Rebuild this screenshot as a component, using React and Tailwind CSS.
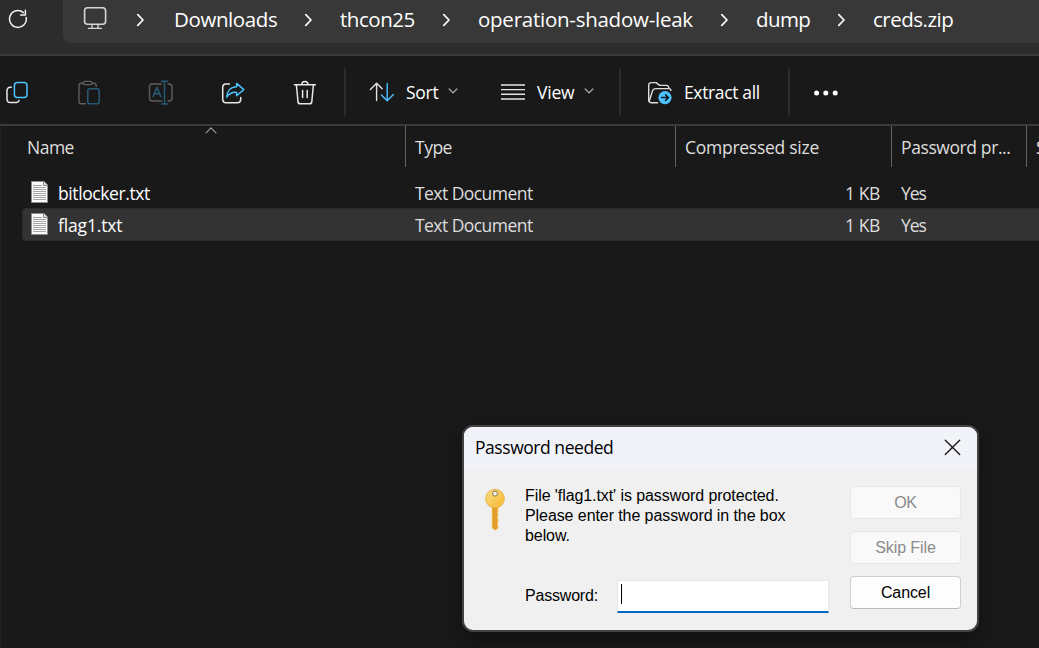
import React from "react";

const Svg = ({ w, h, className = "", children }) => (
  <svg width={w} height={h} viewBox={`0 0 ${w} ${h}`} fill="none" strokeLinecap="round" strokeLinejoin="round" className={`block shrink-0 ${className}`}>
    {children}
  </svg>
);

const CrumbChevron = ({ className }) => (
  <Svg w={8} h={14} className={className}>
    <path d="M1.8 1.6 L7 7 L1.8 12.4" stroke="#f5f5f5" strokeWidth="1.8" />
  </Svg>
);

const DownChevron = ({ className }) => (
  <Svg w={10} h={6} className={className}>
    <path d="M1.2 1 L5 4.8 L8.8 1" stroke="#b4b4b4" strokeWidth="1.2" />
  </Svg>
);

const Separator = ({ className }) => <div className={`-mt-0.5 h-12 w-0.5 shrink-0 bg-[#2c2c2c] ${className}`} />;

function AddressBar() {
  return (
    <div className="flex h-14 shrink-0 border-b-2 border-[#3a3a3a] bg-[#2c2c2c]">
      <div className="w-[63px] shrink-0 pt-2 pl-2">
        <Svg w={20} h={22}>
          <path d="M18.2 9.5 A8.4 8.4 0 1 1 15.4 4.6" stroke="#f2f2f2" strokeWidth="1.5" />
          <path d="M17.4 2.2 V7 H12.6" stroke="#f2f2f2" strokeWidth="1.5" />
        </Svg>
      </div>
      <div className="flex h-[43px] min-w-0 flex-1 items-center overflow-hidden rounded-bl-lg bg-[#383838] pb-[4px] text-[20.5px] leading-none whitespace-nowrap text-white">
        <Svg w={24} h={24} className="ml-5 -mt-1">
          <rect x="1.6" y="1.8" width="21" height="16.4" rx="3" stroke="#d6d6d6" strokeWidth="1.6" />
          <path d="M9 18.5 V22 M15 18.5 V22 M5.5 22.4 H18.5" stroke="#d6d6d6" strokeWidth="1.4" />
        </Svg>
        <CrumbChevron className="ml-[29px]" />
        <span className="-mt-px ml-[30px] w-[105px] tracking-[-0.4px]">Downloads</span>
        <CrumbChevron className="ml-[25px]" />
        <span className="-mt-px ml-[28px] w-[76px] tracking-[-0.45px]">thcon25</span>
        <CrumbChevron className="ml-[26px]" />
        <span className="-mt-px ml-[28px] w-[217px] tracking-[-0.25px]">operation-shadow-leak</span>
        <CrumbChevron className="ml-[25px]" />
        <span className="-mt-px ml-[28px] w-[56px] tracking-[-0.6px]">dump</span>
        <CrumbChevron className="ml-[25px]" />
        <span className="-mt-px ml-[28px] tracking-[-0.5px]">creds.zip</span>
      </div>
    </div>
  );
}

function Toolbar() {
  return (
    <div className="flex h-[70px] shrink-0 items-center border-b-2 border-[#3a3a3a] pb-px pt-[7px] text-[17.5px] leading-none whitespace-nowrap text-white">
      <Svg w={24} h={24} className="-mt-px ml-[5px]">
        <rect x="9.4" y="1.6" width="12.6" height="15" rx="3" stroke="#4cc2ff" strokeWidth="1.5" />
        <path d="M6.2 6.3 H5 A3 3 0 0 0 2 9.3 V18.3 A3.4 3.4 0 0 0 5.4 21.6 H11 A3 3 0 0 0 14 19.4" stroke="#e8e8e8" strokeWidth="1.5" />
      </Svg>
      <Svg w={24} h={26} className="-mt-px ml-12">
        <path d="M8.4 23.8 H4.4 A2.4 2.4 0 0 1 2 21.4 V5.4 A2.4 2.4 0 0 1 4.4 3.2 H6 M15 3.2 H17 A2.4 2.4 0 0 1 19.2 5.4 V6.4" stroke="#5e5e5e" strokeWidth="1.4" />
        <rect x="6.2" y="1.4" width="8.8" height="3.2" rx="1.6" stroke="#5e5e5e" strokeWidth="1.4" />
        <rect x="10.8" y="8.8" width="11.4" height="15" rx="2" stroke="#285a76" strokeWidth="1.5" />
      </Svg>
      <Svg w={26} h={26} className="-mt-px ml-[47px]">
        <path d="M13.5 4 H4.4 A3 3 0 0 0 1.5 7 V18 A3 3 0 0 0 4.4 21 H13.5 M20 4 H21 A3 3 0 0 1 24 7 V18 A3 3 0 0 1 21 21 H20" stroke="#5e5e5e" strokeWidth="1.4" />
        <path d="M13.4 1.2 H19.6 M13.4 24 H19.6 M16.5 1.2 V24 M5 16.6 L8.9 7.4 L12.8 16.6 M6.4 13.7 H11.4" stroke="#285a76" strokeWidth="1.5" />
      </Svg>
      <Svg w={24} h={24} className="-mt-px ml-[47px]">
        <path d="M8.4 3 H5 A3.4 3.4 0 0 0 1.7 6.4 V18.4 A3.4 3.4 0 0 0 5 21.7 H16.4 A3.4 3.4 0 0 0 19.7 18.4 V16.6" stroke="#e8e8e8" strokeWidth="1.5" />
        <path d="M15.6 2.4 L22.8 8.6 L15.6 14.8 V11.4 C11.2 11 8 12.8 5.8 16.2 C6 10 9.6 6 15.6 5.8 Z" stroke="#4cc2ff" strokeWidth="1.5" />
      </Svg>
      <Svg w={24} h={26} className="-mt-px ml-12">
        <path d="M1.4 4.8 H22.4 M8.8 4.6 A3.1 3.1 0 0 1 15 4.6 M3.4 5 L5 21.6 A2.3 2.3 0 0 0 7.2 23.8 H16.6 A2.3 2.3 0 0 0 18.8 21.6 L20.4 5 M9.6 10.4 V17.6 M14.2 10.4 V17.6" stroke="#e8e8e8" strokeWidth="1.5" />
      </Svg>
      <Separator className="ml-[27px]" />
      <Svg w={26} h={20} className="-mt-0.5 ml-[23px]">
        <path d="M7.6 18.6 V1.4 M1.4 7.4 L7.6 1.2 L13.2 6.8" stroke="#e0e0e0" strokeWidth="1.4" />
        <path d="M18.2 1.4 V18.6 M12.4 13 L18.2 18.8 L24.4 12.6" stroke="#4cc2ff" strokeWidth="1.4" />
      </Svg>
      <span className="ml-[11px] w-[34px] tracking-[-0.3px]">Sort</span>
      <DownChevron className="-mt-1 ml-2" />
      <Svg w={24} h={18} className="-mt-[3px] ml-[43px]">
        <path d="M0 2 H24 M0 6.6 H24 M0 11.2 H24 M0 16 H24" stroke="#e4e4e4" strokeWidth="1.4" strokeLinecap="butt" />
      </Svg>
      <span className="ml-3 w-[39px] tracking-[-0.2px]">View</span>
      <DownChevron className="-mt-1 ml-2" />
      <Separator className="ml-[25px]" />
      <Svg w={26} h={26} className="-mt-px ml-[26px]">
        <path d="M10.6 22.8 H4.4 A2.6 2.6 0 0 1 1.7 20.2 V5.2 A2.6 2.6 0 0 1 4.4 2.6 H9.2 L12.6 5.4 H19.4 A2.4 2.4 0 0 1 21.8 8" stroke="#dedede" strokeWidth="1.4" />
        <path d="M2.2 21.2 L5.6 10.6 A3 3 0 0 1 8.4 8.6 H22 A2 2 0 0 1 23.9 10.6" stroke="#dedede" strokeWidth="1.4" />
        <circle cx="18" cy="17.6" r="6.6" fill="#4cc2ff" />
        <path d="M14.6 17.6 H21.2 M18.6 14.8 L21.4 17.6 L18.6 20.4" stroke="#0b1a22" strokeWidth="1.5" />
      </Svg>
      <span className="ml-[11px] w-[78px] tracking-[-0.35px]">Extract all</span>
      <Separator className="ml-[26px]" />
      <Svg w={26} h={8} className="ml-[23px]">
        <circle cx="3.6" cy="4" r="2.5" fill="#fff" />
        <circle cx="12.8" cy="4" r="2.5" fill="#fff" />
        <circle cx="22.2" cy="4" r="2.5" fill="#fff" />
      </Svg>
    </div>
  );
}

function FileIcon() {
  return (
    <Svg w={18} h={22} className="-mt-px">
      <path d="M0.5 0.5 H13 L16.5 4 V21.5 H0.5 Z" fill="#fafafa" stroke="#8c8c8c" strokeLinejoin="miter" />
      <path d="M12.5 0.5 V4.5 H16.5" fill="#e0e0e0" stroke="#8c8c8c" />
      <path d="M2 4.5 H11 M2 6.5 H15 M2 8.5 H15 M2 10.5 H15 M2 12.5 H15 M2 14.5 H15 M2 16.5 H15 M2 18.5 H15" stroke="#a6a6a6" strokeLinecap="butt" />
    </Svg>
  );
}

function FileRow({ name, selected }) {
  return (
    <div
      className={
        selected
          ? "ml-[22px] flex h-[33px] items-center rounded-l-sm border-y border-l border-[#2b2b2b] bg-[#333333]"
          : "ml-[22px] flex h-8 items-center border-l border-transparent"
      }
    >
      <div className="w-[35px] shrink-0 pl-2">
        <FileIcon />
      </div>
      <span className={`w-[357px] shrink-0 pt-[3px] text-white ${selected ? "tracking-[-0.15px]" : "tracking-[-0.4px]"}`}>{name}</span>
      <span className="w-[270px] shrink-0 pt-[3px] tracking-[-0.55px]">Text Document</span>
      <span className="w-[196px] shrink-0 pt-[3px] pr-px text-right tracking-[-0.4px]">1 KB</span>
      <span className="pl-5 pt-[3px] tracking-[-1.1px]">Yes</span>
    </div>
  );
}

function FileList() {
  return (
    <div className="flex-1 border-l border-[#232323] text-[17.5px] leading-none whitespace-nowrap text-[#dedede]">
      <div className="-ml-px flex h-[41px] overflow-hidden">
        <div className="flex w-[406px] shrink-0 border-r border-[#636363]">
          <span className="w-[178px] pt-[13px] pl-[27px] tracking-[-0.5px]">Name</span>
          <Svg w={12} h={8} className="ml-[27px]">
            <path d="M1 6.8 L6 1.8 L11 6.8" stroke="#a0a0a0" strokeWidth="1.1" />
          </Svg>
        </div>
        <div className="w-[270px] shrink-0 border-r border-[#636363] pt-[13px] pl-[9px] tracking-[-0.5px]">Type</div>
        <div className="w-[216px] shrink-0 border-r border-[#636363] pt-[13px] pl-[9px] tracking-[-0.27px]">Compressed size</div>
        <div className="w-[135px] shrink-0 border-r border-[#636363] pt-[13px] pl-[9px] tracking-[-0.4px]">Password pr...</div>
        <div className="shrink-0 pt-[13px] pl-[9px]">S</div>
      </div>
      <div className="-ml-px pt-[9px]">
        <FileRow name="bitlocker.txt" />
        <FileRow name="flag1.txt" selected />
      </div>
    </div>
  );
}

function KeyIcon() {
  return (
    <svg width="22" height="44" viewBox="0 0 22 44" className="block">
      <defs>
        <linearGradient id="bow" x1="0" y1="0" x2="1" y2="1">
          <stop offset="0" stopColor="#f7dc86" />
          <stop offset="1" stopColor="#f9b82e" />
        </linearGradient>
        <linearGradient id="blade" x1="0" y1="0" x2="1" y2="0">
          <stop offset="0" stopColor="#f5b83d" />
          <stop offset="0.45" stopColor="#e6a233" />
          <stop offset="1" stopColor="#f6bb48" />
        </linearGradient>
      </defs>
      <path d="M7.8 19 H14.4 V24 L13.6 26 L14.6 28 L13.6 30.5 L14.6 33.5 L13.8 36.5 L14.4 41 L11.4 43.6 L7.8 41 Z" fill="url(#blade)" />
      <circle cx="11" cy="11.6" r="9.4" fill="url(#bow)" stroke="#e3aa3c" strokeWidth="0.8" />
      <path d="M9.6 21 V41.5 M12 21 V42" stroke="#cf861b" strokeWidth="0.7" />
      <circle cx="11" cy="6.6" r="2.5" fill="#f1eee4" stroke="#8a764b" strokeWidth="1" />
    </svg>
  );
}

function PasswordDialog() {
  return (
    <div className="absolute top-[425px] left-[462px] flex h-[207px] w-[517px] flex-col overflow-hidden rounded-[11px] border-2 border-[#424242] bg-[#f0f0f0] text-black shadow-[0_8px_20px_rgba(0,0,0,0.35)]">
      <div className="flex h-[43px] shrink-0 items-center justify-between bg-[#f1f3f9] pr-[15px] pb-0.5 pl-[11px] text-[17.5px] leading-none">
        <span className="tracking-[-0.45px]">Password needed</span>
        <Svg w={18} h={18}>
          <path d="M1.3 1.2 L15.7 15.6 M15.7 1.2 L1.3 15.6" stroke="#1a1a1a" strokeWidth="1.4" />
        </Svg>
      </div>
      <div className="flex flex-1 font-['Liberation_Sans',Arial,sans-serif] text-base leading-5">
        <div className="w-[61px] shrink-0 pt-[17px] pl-5">
          <KeyIcon />
        </div>
        <div className="flex w-[304px] shrink-0 flex-col pt-4">
          <p className="w-[290px] tracking-[-0.08px]">
            File 'flag1.txt' is password protected.
            <br />
            Please enter the password in the box
            <br />
            below.
          </p>
          <div className="mt-[34px] flex">
            <span className="w-[92px] shrink-0 pt-[6px] tracking-[-0.2px]">Password:</span>
            <div className="h-[33px] w-[212px] border-x border-t border-b-2 border-[#e6e6e6] border-b-[#0067c0] bg-white pt-[3px] pl-[3px]">
              <div className="h-5 w-px bg-black" />
            </div>
          </div>
        </div>
        <div className="ml-[21px] flex flex-col gap-3 pt-4">
          <button className="h-[33px] w-[111px] rounded border border-[#e6e6e6] bg-[#f9f9f9] tracking-[-0.4px] text-[#8b8b8b]">OK</button>
          <button className="h-[33px] w-[111px] rounded border border-[#e6e6e6] bg-[#f9f9f9] tracking-[-0.1px] text-[#8b8b8b]">Skip File</button>
          <button className="h-[33px] w-[111px] rounded border border-[#cfcfcf] border-b-[#bababa] bg-[#fdfdfd] tracking-[-0.1px]">Cancel</button>
        </div>
      </div>
    </div>
  );
}

export default function App() {
  return (
    <div className="relative flex h-[648px] w-[1039px] flex-col overflow-hidden bg-[#191919] font-['Open_Sans','Noto_Sans',sans-serif]">
      <AddressBar />
      <Toolbar />
      <FileList />
      <PasswordDialog />
    </div>
  );
}
